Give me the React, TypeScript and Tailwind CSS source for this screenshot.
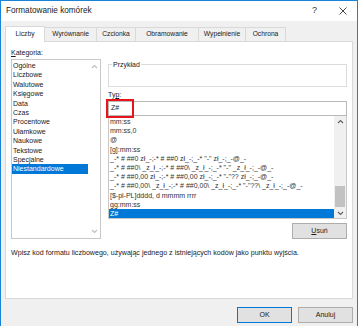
import React from 'react';

const categories = [
  'Ogólne',
  'Liczbowe',
  'Walutowe',
  'Księgowe',
  'Data',
  'Czas',
  'Procentowe',
  'Ułamkowe',
  'Naukowe',
  'Tekstowe',
  'Specjalne',
  'Niestandardowe',
];

const formats = [
  'mm:ss',
  'mm:ss,0',
  '@',
  '[g]:mm:ss',
  '_-* # ##0 zł_-;-* # ##0 zł_-;_-* "-" zł_-;_-@_-',
  '_-* # ##0\\ _z_ł_-;-* # ##0\\ _z_ł_-;_-* "-" _z_ł_-;_-@_-',
  '_-* # ##0,00 zł_-;-* # ##0,00 zł_-;_-* "-"?? zł_-;_-@_-',
  '_-* # ##0,00\\ _z_ł_-;-* # ##0,00\\ _z_ł_-;_-* "-"??\\ _z_ł_-;_-@_-',
  '[$-pl-PL]dddd, d mmmm rrrr',
  'gg:mm:ss',
  'Z#',
];

const tabs = ['Liczby', 'Wyrównanie', 'Czcionka', 'Obramowanie', 'Wypełnienie', 'Ochrona'];
const tabWidths = ['w-[40px]', 'w-[52px]', 'w-[39px]', 'w-[63px]', 'w-[47px]', 'w-[40px]'];

const Chevron = ({ up }: { up?: boolean }) => (
  <svg width="7" height="5" viewBox="0 0 7 5" className="text-[#606060]">
    <path d={up ? 'M1 4 L3.5 1.5 L6 4' : 'M1 1 L3.5 3.5 L6 1'} stroke="currentColor" strokeWidth="1.1" fill="none" />
  </svg>
);

export default function App() {
  return (
    <div
      className="w-[358px] h-[326px] overflow-hidden bg-[#f0f0f0] border-x border-t border-[#1883d7] flex flex-col text-[#1a1a1a]"
      style={{ fontFamily: '"Liberation Sans", Arial, sans-serif' }}
    >
      {/* title bar */}
      <div className="h-[20px] bg-white flex items-center pl-[5px] pr-[10px] shrink-0">
        <span className="text-[8.2px]">Formatowanie komórek</span>
        <span className="ml-auto text-[9px] text-[#333] mr-[22px]">?</span>
        <svg width="8" height="8" viewBox="0 0 8 8">
          <path d="M0.5 0.5 L7.5 7.5 M7.5 0.5 L0.5 7.5" stroke="#333" strokeWidth="0.9" />
        </svg>
      </div>

      {/* tabs */}
      <div className="flex items-end h-[20px] pl-[4px] shrink-0">
        {tabs.map((t, i) => (
          <div
            key={t}
            className={
              i === 0
                ? `${tabWidths[i]} h-[16px] bg-white border-x border-t border-[#d9d9d9] -mb-px relative z-10 flex items-center justify-center text-[6.7px]`
                : `${tabWidths[i]} h-[14px] bg-[#f0f0f0] border-t border-r border-[#d9d9d9] flex items-center justify-center text-[6.7px]`
            }
          >
            {t}
          </div>
        ))}
      </div>

      {/* panel */}
      <div className="ml-[4px] w-[348px] h-[258px] bg-white border border-[#d9d9d9] shrink-0 flex flex-col pl-[5px] pt-[5px]">
        <div className="flex gap-[7px]">
          {/* left column */}
          <div className="w-[90px] flex flex-col">
            <div className="h-[11px] text-[7px] leading-[11px]">
              <span className="underline">K</span>ategoria:
            </div>
            <div className="mt-px h-[180px] border border-[#c8c8c8] flex">
              <div className="flex-1 pt-[1px]">
                {categories.map((c) => (
                  <div
                    key={c}
                    className={
                      c === 'Niestandardowe'
                        ? 'h-[9.4px] leading-[9.4px] text-[7px] pl-[1px] bg-[#0078d7] text-white'
                        : 'h-[9.4px] leading-[9.4px] text-[7px] pl-[1px]'
                    }
                  >
                    {c}
                  </div>
                ))}
              </div>
              <div className="w-[12px] flex flex-col items-center justify-between py-[4px]">
                <span className="opacity-40">
                  <Chevron up />
                </span>
                <span className="opacity-40">
                  <Chevron />
                </span>
              </div>
            </div>
          </div>

          {/* right column */}
          <div className="w-[239px] flex flex-col">
            <div className="mt-[17px] h-[23px] border border-[#dcdcdc] relative">
              <span className="absolute -top-[5px] left-[3px] bg-white px-px text-[7px] leading-[9px]">Przykład</span>
            </div>
            <div className="mt-[2px] h-[12px] text-[7px] leading-[12px]">
              Ty<span className="underline">p</span>:
            </div>
            <div className="relative h-[15px] border border-[#b8b8b8] flex items-center pl-[2px] text-[7px]">
              Z#
              <div className="absolute -left-[3px] -top-[3px] w-[28px] h-[19px] border-2 border-[#e8141c]" />
            </div>
            <div className="h-[103px] border-x border-b border-[#c8c8c8] flex">
              <div className="flex-1 pt-[1px] overflow-hidden">
                {formats.map((f) => (
                  <div
                    key={f}
                    className={
                      f === 'Z#'
                        ? 'h-[9.2px] leading-[9.2px] text-[7px] pl-[1px] bg-[#0078d7] text-white whitespace-nowrap'
                        : 'h-[9.2px] leading-[9.2px] text-[7px] pl-[1px] whitespace-nowrap text-[#333]'
                    }
                  >
                    {f}
                  </div>
                ))}
              </div>
              <div className="w-[12px] bg-[#f0f0f0] flex flex-col items-center">
                <div className="h-[10px] flex items-center">
                  <Chevron up />
                </div>
                <div className="flex-1 w-full relative">
                  <div className="absolute left-[1px] right-[1px] bottom-[1px] h-[21px] bg-[#c2c2c2]" />
                </div>
                <div className="h-[10px] flex items-center">
                  <Chevron />
                </div>
              </div>
            </div>
            <div className="mt-[4px] self-end w-[55px] h-[16px] bg-[#e1e1e1] border border-[#adadad] flex items-center justify-center text-[7px]">
              <span className="underline">U</span>suń
            </div>
          </div>
        </div>
        <div className="mt-[9px] text-[7.1px] leading-[10px] text-[#222] whitespace-nowrap">
          Wpisz kod formatu liczbowego, używając jednego z istniejących kodów jako punktu wyjścia.
        </div>
      </div>

      {/* buttons */}
      <div className="flex justify-end gap-[6px] mt-[8px] pr-[4px]">
        <div className="w-[55px] h-[16px] bg-[#e1e1e1] border border-[#0078d7] flex items-center justify-center text-[7px]">
          OK
        </div>
        <div className="w-[55px] h-[16px] bg-[#e1e1e1] border border-[#adadad] flex items-center justify-center text-[7px]">
          Anuluj
        </div>
      </div>
    </div>
  );
}
